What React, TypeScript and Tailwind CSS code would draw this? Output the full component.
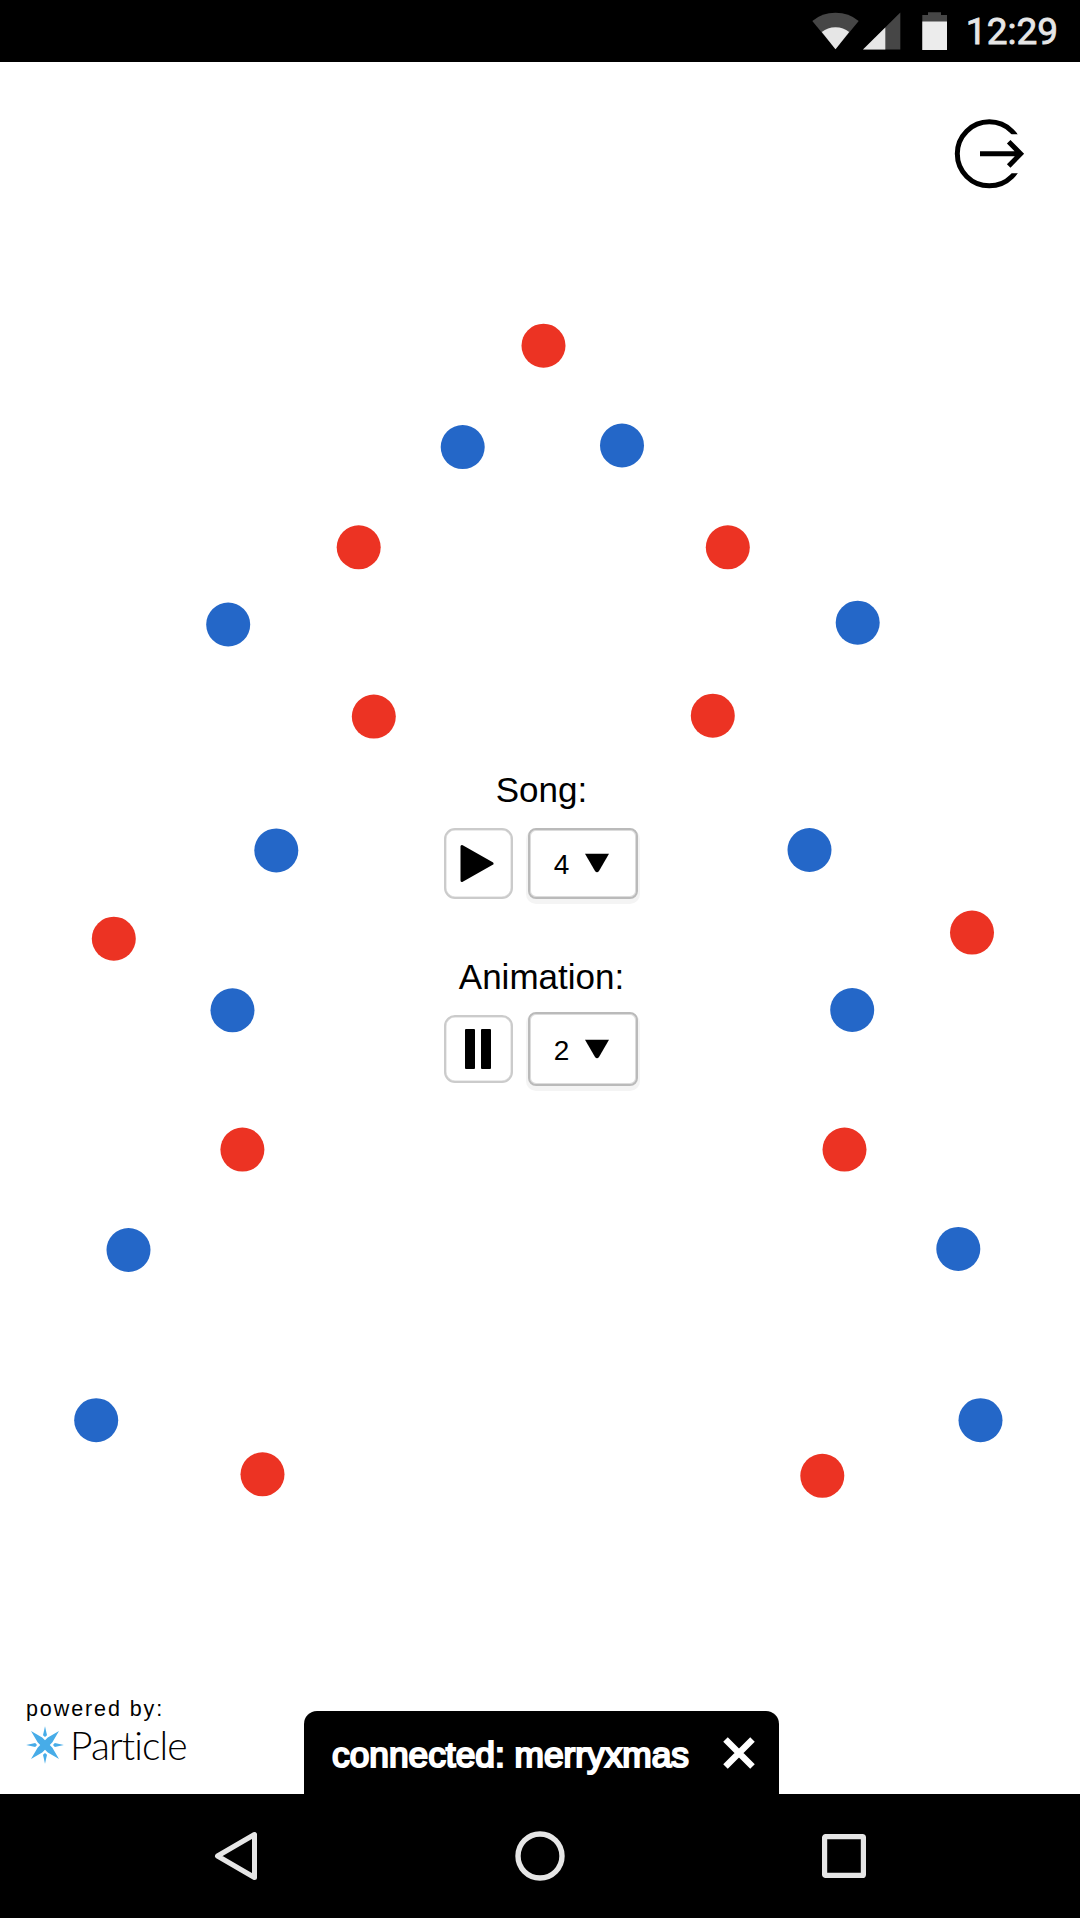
const RED = 'bg-[#ec3323]';
const BLUE = 'bg-[#2467c8]';

const lights: { x: number; y: number; color: string }[] = [
  { x: 543.5, y: 345.7, color: RED },
  { x: 462.7, y: 447.1, color: BLUE },
  { x: 622, y: 445.5, color: BLUE },
  { x: 358.7, y: 547.3, color: RED },
  { x: 727.8, y: 547.3, color: RED },
  { x: 228.2, y: 624.5, color: BLUE },
  { x: 857.7, y: 622.7, color: BLUE },
  { x: 373.8, y: 716.6, color: RED },
  { x: 712.8, y: 715.7, color: RED },
  { x: 276.3, y: 850.4, color: BLUE },
  { x: 809.5, y: 850, color: BLUE },
  { x: 113.8, y: 938.7, color: RED },
  { x: 972, y: 932.6, color: RED },
  { x: 232.5, y: 1010.3, color: BLUE },
  { x: 852.2, y: 1010, color: BLUE },
  { x: 242.4, y: 1149.6, color: RED },
  { x: 844.5, y: 1149.6, color: RED },
  { x: 128.5, y: 1250, color: BLUE },
  { x: 958.3, y: 1248.9, color: BLUE },
  { x: 96.2, y: 1420.2, color: BLUE },
  { x: 980.5, y: 1420.2, color: BLUE },
  { x: 262.5, y: 1474.3, color: RED },
  { x: 822.3, y: 1475.8, color: RED },
];

const STATUS_HEIGHT = 62;
const RADIUS = 22;

function StatusBar() {
  return (
    <header className="flex h-[62px] shrink-0 items-start justify-end bg-black pr-[22px]">
      <svg className="mt-3 h-[38px] w-[47px]" viewBox="0 0 47 38">
        <path d="M23.5 37.3 0.3 9Q10 .8 23.5 .8T46.7 9Z" fill="#464646" />
        <path d="M23.5 37.3 9.8 20Q15.5 15.3 23.5 15.3T37.2 20Z" fill="#e6e6e6" />
      </svg>
      <svg className="mt-3 ml-1 h-[38px] w-[38px]" viewBox="0 0 38 38">
        <path d="M0 37.5 37.3 .5V37.5Z" fill="#464646" />
        <path d="M0 37.5 22.3 15.4V37.5Z" fill="#e6e6e6" />
      </svg>
      <svg className="mt-3 ml-[20.5px] h-[38px] w-[25px]" viewBox="0 0 25 38">
        <path d="M6 .3H19V3H25V38H.3V3H6Z" fill="#464646" />
        <path d="M.3 9.5H25V38H.3Z" fill="#ececec" />
      </svg>
      <time className="mt-[10px] ml-[19px] font-['Roboto',sans-serif] text-[37px] leading-[44px] font-normal text-[#e6e6e6] [-webkit-text-stroke:0.8px_#e6e6e6]">
        12:29
      </time>
    </header>
  );
}

function Lights() {
  return (
    <>
      {lights.map((l) => (
        <span
          key={`${l.x}-${l.y}`}
          className={`absolute top-0 left-0 size-11 rounded-full ${l.color}`}
          style={{ transform: `translate(${l.x - RADIUS}px, ${l.y - STATUS_HEIGHT - RADIUS}px)` }}
        />
      ))}
    </>
  );
}

function Select({ value, tall }: { value: string; tall?: boolean }) {
  return (
    <button
      className={`flex w-[110px] items-start justify-center gap-4 rounded-[8px] border-2 border-[#bababa] bg-white pr-[3px] text-[28px] leading-8 shadow-[0_3px_0_2px_#f4f4f4,inset_0_0_0_1px_#dcdcdc] ${
        tall ? 'h-[74px] pt-[20px]' : 'h-[71px] pt-[18px]'
      }`}
    >
      <span className="pt-px">{value}</span>
      <svg className="mt-[5px] h-[20px] w-6" viewBox="0 0 24 20">
        <path d="M0 .8H24L14 18Q12 20.4 10 18Z" />
      </svg>
    </button>
  );
}

function Controls() {
  return (
    <section className="flex flex-col items-center pl-px">
      <h2 className="pl-[2px] text-[35px] leading-10">Song:</h2>
      <div className="mt-[18px] flex items-start gap-[15px] pl-px">
        <button className="flex h-[71px] w-[69px] items-center justify-center rounded-[11px] border-2 border-[#cbcbcb] pr-[3px] shadow-[inset_0_0_0_0.5px_#d8d8d8]" aria-label="Play song">
          <svg className="h-[39px] w-[34px]" viewBox="0 0 34 39">
            <path d="M2 2.5V36.5L32 19.5Z" stroke="black" strokeWidth="3" strokeLinejoin="round" />
          </svg>
        </button>
        <Select value="4" />
      </div>
      <h2 className="mt-[58px] pl-[2px] text-[35px] leading-10">Animation:</h2>
      <div className="mt-[15px] flex items-start gap-[15px] pl-px">
        <button
          className="mt-[3px] flex h-[68px] w-[69px] items-center justify-center gap-1.5 rounded-[11px] border-2 border-[#cbcbcb] pr-px shadow-[inset_0_0_0_0.5px_#d8d8d8]"
          aria-label="Pause animation"
        >
          <span className="h-10 w-2.5 rounded-[1px] bg-black" />
          <span className="h-10 w-2.5 rounded-[1px] bg-black" />
        </button>
        <Select value="2" tall />
      </div>
    </section>
  );
}

function ParticleStar() {
  return (
    <svg className="size-[38px]" viewBox="-19 -19 38 38" fill="#47ace8">
      <path d="M-14-14-2.8-7.4 0-4.8 2.8-7.4 14-14 7.4-2.8 4.8 0 7.4 2.8 14 14 2.8 7.4 0 4.8-2.8 7.4-14 14-7.4 2.8-4.8 0-7.4-2.8Z" />
      {[0, 90, 180, 270].map((a) => (
        <path key={a} transform={`rotate(${a})`} d="M0-18.8 2-9.8 0-8-2-9.8Z" />
      ))}
    </svg>
  );
}

function Footer() {
  return (
    <footer className="mt-auto flex items-end">
      <div className="mb-[26px] w-[304px] pl-[26px]">
        <p className="text-[21.5px] leading-6 tracking-[1.9px]">powered by:</p>
        <div className="flex h-[47px] items-center">
          <ParticleStar />
          <span className="ml-[6px] font-['Lato',sans-serif] text-[39px] leading-[46px] font-light tracking-[-0.9px]">Particle</span>
        </div>
      </div>
      <div className="flex h-[83.5px] w-[475px] items-start rounded-t-[13px] bg-black pt-[24px] pl-[28px] text-white">
        <span className="text-[35.3px] leading-10 whitespace-nowrap [-webkit-text-stroke:2.1px_white]">connected: merryxmas</span>
        <svg className="mt-[2px] mr-[24px] ml-auto size-8" viewBox="0 0 32 32" stroke="white" strokeWidth="6.4">
          <path d="M2.5 2.5 29.5 29.5M29.5 2.5 2.5 29.5" />
        </svg>
      </div>
    </footer>
  );
}

function NavBar() {
  return (
    <nav className="flex h-[124px] shrink-0 items-center justify-between bg-black px-[214px]">
      <svg className="size-[50px]" viewBox="0 0 50 50" fill="none" stroke="#e6e6e6" strokeWidth="5" strokeLinejoin="round">
        <path d="M3.5 25 40.5 3.5V46.5Z" />
      </svg>
      <svg className="-ml-[6px] size-[50px]" viewBox="0 0 50 50" fill="none" stroke="#e6e6e6" strokeWidth="5.4">
        <circle cx="25" cy="25" r="22" />
      </svg>
      <svg className="size-[44px]" viewBox="0 0 44 44" fill="none" stroke="#e6e6e6" strokeWidth="5.2">
        <rect x="2.6" y="2.6" width="38.8" height="38.8" rx="1" />
      </svg>
    </nav>
  );
}

export default function App() {
  return (
    <div className="flex h-[1918px] w-[1080px] flex-col overflow-hidden bg-white font-['Liberation_Sans',Arial,sans-serif] text-black">
      <StatusBar />
      <main className="relative flex flex-1 flex-col">
        <div className="flex h-[708px] items-start justify-end pt-[56px] pr-[54px]">
          <svg className="h-[72px] w-[72px]" viewBox="0 0 72 72" fill="none" stroke="black" strokeWidth="5">
            <defs>
              <clipPath id="ring-gap">
                <path d="M0 0H72V16.3H0ZM0 16.3H50V55.3H0ZM0 55.3H72V72H0Z" />
              </clipPath>
            </defs>
            <circle cx="35.3" cy="35.8" r="32" clipPath="url(#ring-gap)" />
            <path d="M26 35.8H67M54.7 23.7 66.6 35.8 54.7 47.9" />
          </svg>
        </div>
        <Controls />
        <Lights />
        <Footer />
      </main>
      <NavBar />
    </div>
  );
}
